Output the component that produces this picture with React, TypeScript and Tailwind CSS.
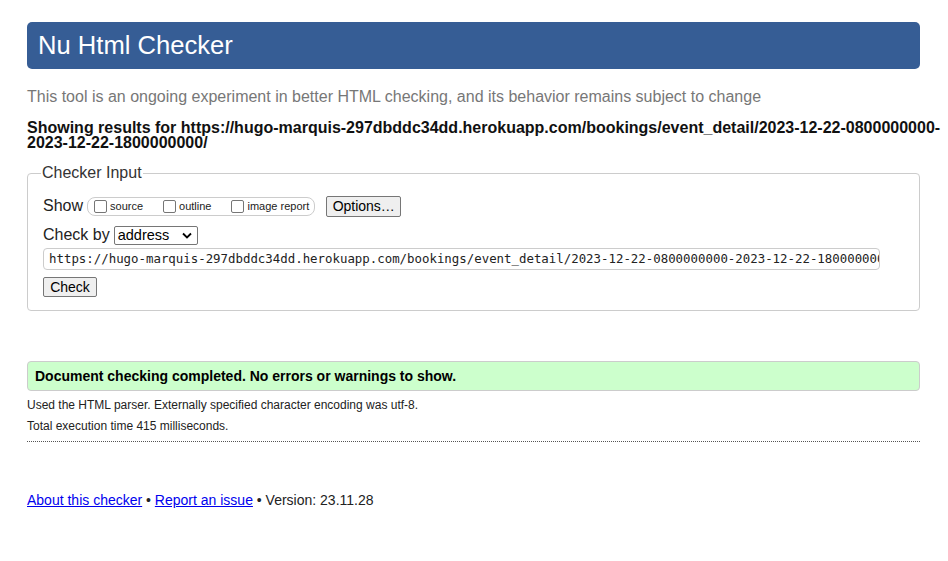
import React from "react";

const URL = "https://hugo-marquis-297dbddc34dd.herokuapp.com/bookings/event_detail/2023-12-22-0800000000-2023-12-22-1800000000/";

function Box({ label, last }: { label: string; last?: boolean }) {
  return (
    <label className={`flex items-center ${last ? "" : "mr-[20px]"}`}>
      <span className="inline-block w-[13px] h-[13px] border border-[#767676] rounded-[2px] bg-white mr-[3px]" />
      <span className="text-[11px] text-[#222]">{label}</span>
    </label>
  );
}

export default function App() {
  return (
    <div className="w-[948px] h-[561px] bg-white overflow-hidden" style={{ fontFamily: '"Liberation Sans", Arial, sans-serif' }}>
      <div className="ml-[27px] w-[893px]">
        <div className="mt-[22px] h-[47px] bg-[#365d95] rounded-[5px] flex items-center pl-[11px]">
          <span className="text-white text-[25.6px] leading-none">Nu Html Checker</span>
        </div>
        <p className="mt-[19px] text-[16px] leading-[18px] text-[#777]">
          This tool is an ongoing experiment in better HTML checking, and its behavior remains subject to change
        </p>
        <p className="mt-[14px] w-[921px] text-[16px] leading-[15px] font-bold text-[#111]">
          <span className="block whitespace-nowrap">Showing results for https://hugo-marquis-297dbddc34dd.herokuapp.com/bookings/event_detail/2023-12-22-0800000000-</span>
          <span className="block">2023-12-22-1800000000/</span>
        </p>
        <fieldset className="mt-[14px] border border-[#ccc] rounded-[4px] px-[15px] pb-[13px]">
          <legend className="px-[1px] ml-[-2px] text-[16px] leading-[18px] text-[#333]">Checker Input</legend>
          <div className="flex items-center mt-[13px] h-[22px]">
            <span className="text-[16px] text-[#222]">Show</span>
            <div className="ml-[4px] flex items-center h-[19px] border border-[#ccc] rounded-[8px] pl-[6px] pr-[5px]">
              <Box label="source" />
              <Box label="outline" />
              <Box label="image report" last />
            </div>
            <button className="ml-[11px] h-[21px] w-[75px] text-[14px] text-black bg-[#efefef] border border-[#767676] rounded-[2px] leading-none">
              Options…
            </button>
          </div>
          <div className="flex items-center mt-[8px] h-[20px]">
            <span className="text-[16px] text-[#222]">Check by</span>
            <div className="ml-[4px] w-[84px] h-[19px] border border-[#767676] rounded-[2px] flex items-center justify-between pl-[3px] pr-[5px] bg-white">
              <span className="text-[14.5px] leading-none text-black">address</span>
              <svg width="10" height="7" viewBox="0 0 10 7"><path d="M1 1.5 L5 5.5 L9 1.5" fill="none" stroke="#000" strokeWidth="1.8" /></svg>
            </div>
          </div>
          <div className="mt-[3px] w-[837px] h-[22px] border border-[#ccc] rounded-[4px] overflow-hidden flex items-center pl-[5px]">
            <span className="whitespace-nowrap text-[12.4px] text-[#222]" style={{ fontFamily: '"DejaVu Sans Mono", "Liberation Mono", monospace' }}>{URL}</span>
          </div>
          <button className="mt-[7px] w-[54px] h-[20px] text-[14px] leading-none text-black bg-[#efefef] border border-[#767676] rounded-[2px] block">
            Check
          </button>
        </fieldset>
        <div className="mt-[50px] h-[30px] bg-[#ccffcc] border border-[#ccc] rounded-[4px] flex items-center pl-[7px]">
          <span className="text-[14px] font-bold text-black">Document checking completed. No errors or warnings to show.</span>
        </div>
        <p className="mt-[7px] text-[12px] leading-[14px] text-[#222]">Used the HTML parser. Externally specified character encoding was utf-8.</p>
        <p className="mt-[7px] text-[12px] leading-[14px] text-[#222]">Total execution time 415 milliseconds.</p>
        <div className="mt-[8px] border-t border-dotted border-[#555]" />
        <p className="mt-[50px] text-[14px] leading-[16px] text-[#222]">
          <a href="#" className="text-[#0000ee] underline">About this checker</a> • <a href="#" className="text-[#0000ee] underline">Report an issue</a> • Version: 23.11.28
        </p>
      </div>
    </div>
  );
}
